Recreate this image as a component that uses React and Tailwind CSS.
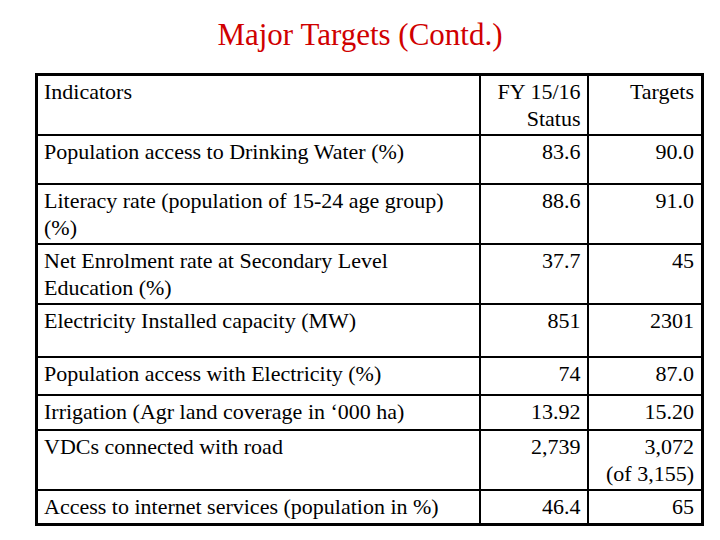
import React from 'react'

const rows = [
  { label: 'Population access to Drinking Water (%)', status: '83.6', target: '90.0', h: 'h-[49px]' },
  { label: 'Literacy rate (population of 15-24 age group) (%)', status: '88.6', target: '91.0', h: 'h-[60px]' },
  { label: 'Net Enrolment rate at Secondary Level Education (%)', status: '37.7', target: '45', h: 'h-[60px]' },
  { label: 'Electricity Installed capacity (MW)', status: '851', target: '2301', h: 'h-[53px]' },
  { label: 'Population access with Electricity (%)', status: '74', target: '87.0', h: 'h-[38px]' },
  { label: 'Irrigation (Agr land coverage in \u2018000 ha)', status: '13.92', target: '15.20', h: 'h-[35px]' },
  { label: 'VDCs connected with road', status: '2,739', target: '3,072 (of 3,155)', h: 'h-[60px]' },
  { label: 'Access to internet services (population in %)', status: '46.4', target: '65', h: 'h-[35px]' },
]

export default function App() {
  return (
    <div className="w-[720px] h-[540px] bg-white text-black [font-family:Liberation_Serif,serif]">
      <h1 className="pt-[16px] text-center text-[31px] leading-[37px] text-[#d00000]">Major Targets (Contd.)</h1>
      <div className="pt-[20px] pl-[35px]">
        <table className="w-[669px] border-collapse border-[3px] border-black text-[22px] leading-[27px]">
          <colgroup>
            <col className="w-[443px]" />
            <col className="w-[108px]" />
            <col />
          </colgroup>
          <tbody>
            <tr className="h-[60px] align-top">
              <td className="border-2 border-black pl-[6px] pt-[2px]">Indicators</td>
              <td className="border-2 border-black pr-[6px] pt-[2px] text-right">FY 15/16<br />Status</td>
              <td className="border-2 border-black pr-[7px] pt-[2px] text-right">Targets</td>
            </tr>
            {rows.map((r) => (
              <tr key={r.label} className={`${r.h} align-top`}>
                <td className="border-2 border-black pl-[6px] pr-[20px] pt-[2px]">{r.label}</td>
                <td className="border-2 border-black pr-[6px] pt-[2px] text-right">{r.status}</td>
                <td className="border-2 border-black pr-[7px] pt-[2px] text-right">
                  {r.target === '3,072 (of 3,155)' ? (<>3,072<br />(of 3,155)</>) : r.target}
                </td>
              </tr>
            ))}
          </tbody>
        </table>
      </div>
    </div>
  )
}
